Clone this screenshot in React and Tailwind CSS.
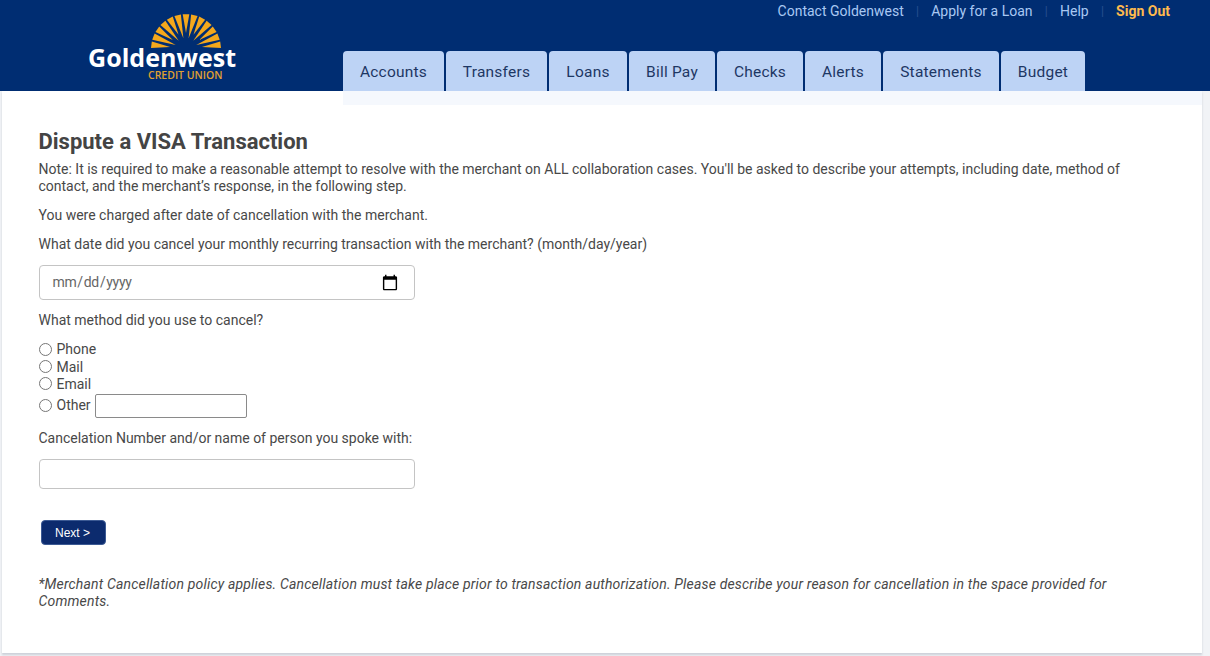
import React from "react";

const F = "font-['Roboto',sans-serif]";
const tabs = [
  ["Accounts", "w-[101px]"],
  ["Transfers", "w-[101px]"],
  ["Loans", "w-[78px]"],
  ["Bill Pay", "w-[86px]"],
  ["Checks", "w-[86px]"],
  ["Alerts", "w-[76px]"],
  ["Statements", "w-[116px]"],
  ["Budget", "w-[84px]"],
];

function Logo() {
  const cx = 42, cy = 41, rays = [];
  const n = 13;
  for (let i = 0; i < n; i++) {
    const a = (Math.PI * (i + 0.5)) / n;
    const w = 0.095;
    const inner = i % 2 ? 11 : 16;
    const outer = 35;
    const p = [
      [cx - Math.cos(a - w) * outer, cy - Math.sin(a - w) * outer],
      [cx - Math.cos(a + w) * outer, cy - Math.sin(a + w) * outer],
      [cx - Math.cos(a) * inner, cy - Math.sin(a) * inner],
    ];
    rays.push(<polygon key={i} points={p.map((q) => q.join(",")).join(" ")} fill="#f5a81c" />);
  }
  return (
    <svg width="84" height="42" viewBox="0 0 84 42" className="block ml-[56px]">
      {rays}
    </svg>
  );
}

export default function App() {
  return (
    <div className={`${F} w-full h-[656px] bg-[#f1f3f6] text-[#484848] text-[14px] leading-[17.5px] overflow-hidden`}>
      <header className="h-[91px] bg-[#002d72] flex">
        <div className="w-[343px] shrink-0 pl-[88px] pt-[8px]">
          <div className="w-[150px] flex flex-col items-start">
            <Logo />
            <div className="font-['Open_Sans',sans-serif] font-bold text-white text-[25px] leading-[22px] -mt-[4px] tracking-[0.05px]">Goldenwest</div>
            <div className="font-['Open_Sans',sans-serif] font-semibold text-[#e0a030] text-[10.5px] leading-[12px] mt-[1px] ml-[60px]">CREDIT UNION</div>
          </div>
        </div>
        <div className="flex-1 flex flex-col">
          <nav className="h-[51px] flex justify-end pt-[3px] pr-[40px] text-[14px] leading-[17px] text-[#a9c8f2]">
            <span>Contact Goldenwest</span>
            <span className="mx-[12.25px] text-[#28508f] text-[12px]">|</span>
            <span>Apply for a Loan</span>
            <span className="mx-[12.25px] text-[#28508f] text-[12px]">|</span>
            <span>Help</span>
            <span className="mx-[12.25px] text-[#28508f] text-[12px]">|</span>
            <span className="font-bold text-[#fdb94e]">Sign Out</span>
          </nav>
          <div className="flex gap-[2px] h-[40px]">
            {tabs.map(([t, w]) => (
              <div key={t} className={`${w} pt-[3px] bg-[#bdd3f5] rounded-t-[4px] text-[#1d3764] text-[15.5px] flex items-center justify-center tracking-[0.22px]`}>
                {t}
              </div>
            ))}
          </div>
        </div>
      </header>
      <main className="ml-[2px] w-[1200px] h-[562px] bg-white shadow-[0_2px_2px_rgba(120,130,150,0.3)] relative">
        <div className="absolute left-[341px] right-0 top-0 h-[14px] bg-[#f5f8fd]" />
        <div className="pl-[36.5px] pr-[60px] pt-[38px]">
          <h1 className="text-[22px] leading-[25px] font-bold text-[#444]">Dispute a VISA Transaction</h1>
          <p className="mt-[6.5px]">
            Note: It is required to make a reasonable attempt to resolve with the merchant on ALL collaboration cases. You'll be asked to describe your attempts, including date, method of contact, and the merchant’s response, in the following step.
          </p>
          <p className="mt-[11.5px]">You were charged after date of cancellation with the merchant.</p>
          <p className="mt-[11.5px]">What date did you cancel your monthly recurring transaction with the merchant? (month/day/year)</p>
          <input
            type="date"
            className="block mt-[11.5px] w-[376px] h-[35px] border border-[#c4c4c4] rounded-[4px] pl-[12px] pr-[15px] text-[14px] tracking-[-0.35px] text-[#666] bg-white [&::-webkit-calendar-picker-indicator]:w-[18px] [&::-webkit-calendar-picker-indicator]:h-[18px] [&::-webkit-calendar-picker-indicator]:m-0 [&::-webkit-calendar-picker-indicator]:p-0"
          />
          <p className="mt-[12px]">What method did you use to cancel?</p>
          <div className="mt-[11.5px]">
            <label className="flex items-center h-[17.5px]"><input type="radio" name="m" className="w-[13px] h-[13px] mr-[5px] ml-0 -mt-[1px]" />Phone</label>
            <label className="flex items-center h-[17.5px]"><input type="radio" name="m" className="w-[13px] h-[13px] mr-[5px] -mt-[2px]" />Mail</label>
            <label className="flex items-center h-[17.5px]"><input type="radio" name="m" className="w-[13px] h-[13px] mr-[5px] -mt-[2px]" />Email</label>
            <label className="flex items-center h-[24px] mt-[0.5px]"><input type="radio" name="m" className="w-[13px] h-[13px] mr-[5px] -mt-[1px]" />Other<input type="text" className="ml-[4px] w-[152px] h-[24px] border border-[#8a8a8a] rounded-[2px] bg-white" /></label>
          </div>
          <p className="mt-[12px]">Cancelation Number and/or name of person you spoke with:</p>
          <input type="text" className="block mt-[11.5px] w-[376px] h-[30px] border border-[#c4c4c4] rounded-[4px] bg-white" />
          <button className="block mt-[31px] ml-[2px] w-[65px] h-[25px] pt-[2px] pr-[1px] bg-[#0c2b6e] border border-[#3c5a94] rounded-[4px] text-white text-[12px] font-['Liberation_Sans',sans-serif]">
            Next &gt;
          </button>
          <p className="mt-[30.5px] italic tracking-[0.175px]">
            *Merchant Cancellation policy applies. Cancellation must take place prior to transaction authorization. Please describe your reason for cancellation in the space provided for Comments.
          </p>
        </div>
      </main>
    </div>
  );
}
